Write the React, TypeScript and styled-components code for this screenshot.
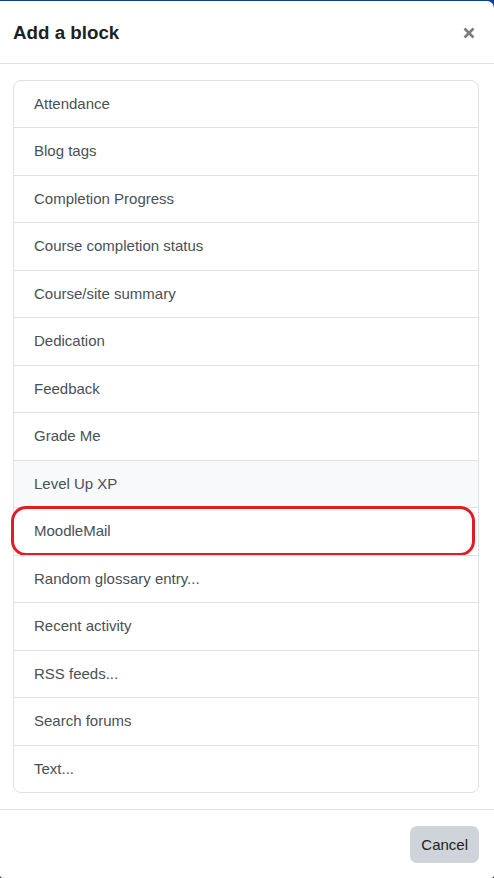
import styled, { createGlobalStyle } from 'styled-components';

const GlobalStyle = createGlobalStyle`
  html, body {
    margin: 0;
    padding: 0;
    background: #ffffff;
  }
  body {
    font-family: "Liberation Sans", Arial, sans-serif;
  }
`;

const Backdrop = styled.div`
  width: 494px;
  height: 878px;
  background: #0e3f8f;
  padding-top: 1px;
  box-sizing: border-box;
  overflow: hidden;
`;

const Modal = styled.div`
  height: 877px;
  background: #fff;
  border-radius: 0 7px 3px 3px;
  display: flex;
  flex-direction: column;
`;

const Header = styled.div`
  height: 63px;
  display: flex;
  align-items: center;
  justify-content: space-between;
  padding: 3px 18px 0 13px;
  box-sizing: border-box;
  border-bottom: 1px solid #dee2e6;
`;

const Title = styled.h5`
  margin: 0;
  font-size: 18.75px;
  font-weight: 700;
  color: #1d2125;
  line-height: 1.2;
`;

const CloseButton = styled.button`
  border: none;
  background: transparent;
  padding: 0;
  width: 14px;
  height: 14px;
  display: flex;
  align-items: center;
  justify-content: center;
  cursor: pointer;
`;

const Body = styled.div`
  padding: 16px 15px 16px 13px;
`;

const List = styled.div`
  border: 1px solid #dee2e6;
  border-radius: 8px;
  display: flex;
  flex-direction: column;
`;

const Item = styled.a<{ $active?: boolean; $marked?: boolean }>`
  position: relative;
  display: block;
  padding: 12px 20px;
  font-size: 15px;
  line-height: 22.5px;
  color: #495057;
  text-decoration: none;
  background: ${(p) => (p.$active ? '#f8f9fa' : 'transparent')};
  border-top: 1px solid #dee2e6;
  cursor: pointer;

  &:first-child {
    border-top: none;
    border-radius: 8px 8px 0 0;
  }
  &:last-child {
    border-radius: 0 0 8px 8px;
  }

  ${(p) =>
    p.$marked &&
    `
    &::after {
      content: '';
      position: absolute;
      left: -3px;
      right: 3px;
      top: -2px;
      bottom: -1px;
      border: 3px solid #e31b23;
      border-radius: 15px;
      pointer-events: none;
    }
  `}
`;

const Footer = styled.div`
  margin-top: auto;
  border-top: 1px solid #dee2e6;
  display: flex;
  justify-content: flex-end;
  padding: 16px 15px 15px;
`;

const Button = styled.button`
  border: none;
  background: #ced4da;
  color: #1d2125;
  border-radius: 7px;
  height: 37px;
  padding: 0 11px;
  font-family: "Liberation Sans", Arial, sans-serif;
  font-size: 15px;
  cursor: pointer;
`;

const blocks = [
  'Attendance',
  'Blog tags',
  'Completion Progress',
  'Course completion status',
  'Course/site summary',
  'Dedication',
  'Feedback',
  'Grade Me',
  'Level Up XP',
  'MoodleMail',
  'Random glossary entry...',
  'Recent activity',
  'RSS feeds...',
  'Search forums',
  'Text...',
];

export default function App(): JSX.Element {
  return (
    <>
      <GlobalStyle />
      <Backdrop>
        <Modal>
          <Header>
            <Title>Add a block</Title>
            <CloseButton aria-label="Close">
              <svg width="12" height="12" viewBox="0 0 12 12">
                <path d="M1.5 1.5 L10.5 10.5 M10.5 1.5 L1.5 10.5" stroke="#7a7a7a" strokeWidth="2.6" strokeLinecap="butt" />
              </svg>
            </CloseButton>
          </Header>
          <Body>
            <List>
              {blocks.map((name) => (
                <Item key={name} $active={name === 'Level Up XP'} $marked={name === 'MoodleMail'}>
                  {name}
                </Item>
              ))}
            </List>
          </Body>
          <Footer>
            <Button>Cancel</Button>
          </Footer>
        </Modal>
      </Backdrop>
    </>
  );
}
